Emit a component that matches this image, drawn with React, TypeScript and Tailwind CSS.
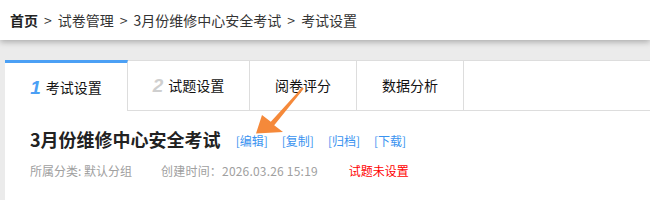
import React from 'react';

const tabs = [
  { num: '1', label: '考试设置', width: 'w-[123px]', active: true },
  { num: '2', label: '试题设置', width: 'w-[122px]', active: false },
  { num: '', label: '阅卷评分', width: 'w-[107px]', active: false },
  { num: '', label: '数据分析', width: 'w-[107px]', active: false },
];

const links = ['[编辑]', '[复制]', '[归档]', '[下载]'];

const App: React.FC = () => {
  return (
    <div className="relative w-[650px] h-[200px] overflow-hidden bg-[#ebebeb] font-['Noto_Sans_CJK_SC',sans-serif] text-[#333]">
      {/* breadcrumb */}
      <div className="relative z-10 h-[40px] bg-white flex items-center pl-[10px] text-[14px] shadow-[0_2px_6px_rgba(0,0,0,0.28)]">
        <span className="font-bold text-[#222]">首页</span>
        <span className="mx-[6px]">&gt;</span>
        <span>试卷管理</span>
        <span className="mx-[6px]">&gt;</span>
        <span>3月份维修中心安全考试</span>
        <span className="mx-[6px]">&gt;</span>
        <span>考试设置</span>
      </div>

      {/* card */}
      <div className="ml-[5px] mt-[20px] bg-white h-[200px]">
        <div className="flex">
          {tabs.map((t) => (
            <div
              key={t.label}
              className={
                t.active
                  ? `${t.width} h-[51px] box-border border-t-[3px] border-t-[#4ba0f5] border-r border-r-[#ddd] flex items-center justify-center text-[14px] text-[#111]`
                  : `${t.width} h-[51px] box-border border-t border-b border-r border-[#ddd] flex items-center justify-center text-[14px] text-[#111]`
              }
            >
              {t.num && (
                <span
                  className={
                    t.active
                      ? "mr-[5px] text-[19px] font-bold italic text-[#4ba0f5] font-['Liberation_Sans',sans-serif] leading-none"
                      : "mr-[5px] text-[19px] font-bold italic text-[#cfcfcf] font-['Liberation_Sans',sans-serif] leading-none"
                  }
                >
                  {t.num}
                </span>
              )}
              <span>{t.label}</span>
            </div>
          ))}
          <div className="flex-1 h-[51px] box-border border-t border-b border-[#ddd]" />
        </div>

        <div className="pl-[25px] pt-[16px]">
          <div className="flex items-center h-[24px]">
            <span className="text-[18px] font-bold text-[#222] mr-[15px]">3月份维修中心安全考试</span>
            {links.map((l) => (
              <span key={l} className="text-[12px] text-[#3a93f0] mr-[14px] mt-[3px]">
                {l}
              </span>
            ))}
          </div>
          <div className="flex items-center h-[18px] mt-[11px] text-[12px] text-[#a0a0a0]">
            <span className="mr-[29px]">所属分类: 默认分组</span>
            <span className="mr-[31px] tracking-[0.2px]">创建时间：2026.03.26 15:19</span>
            <span className="text-[#ff0000]">试题未设置</span>
          </div>
        </div>
      </div>

      {/* annotation arrow */}
      <svg className="absolute left-0 top-0 pointer-events-none z-20" width="650" height="200" viewBox="0 0 650 200">
        <polygon
          points="302.3,87.3 303.7,88.7 274.2,125.3 283,132 256,133.5 262,115 270.8,121.7"
          fill="#f5893a"
        />
      </svg>
    </div>
  );
};

export default App;
